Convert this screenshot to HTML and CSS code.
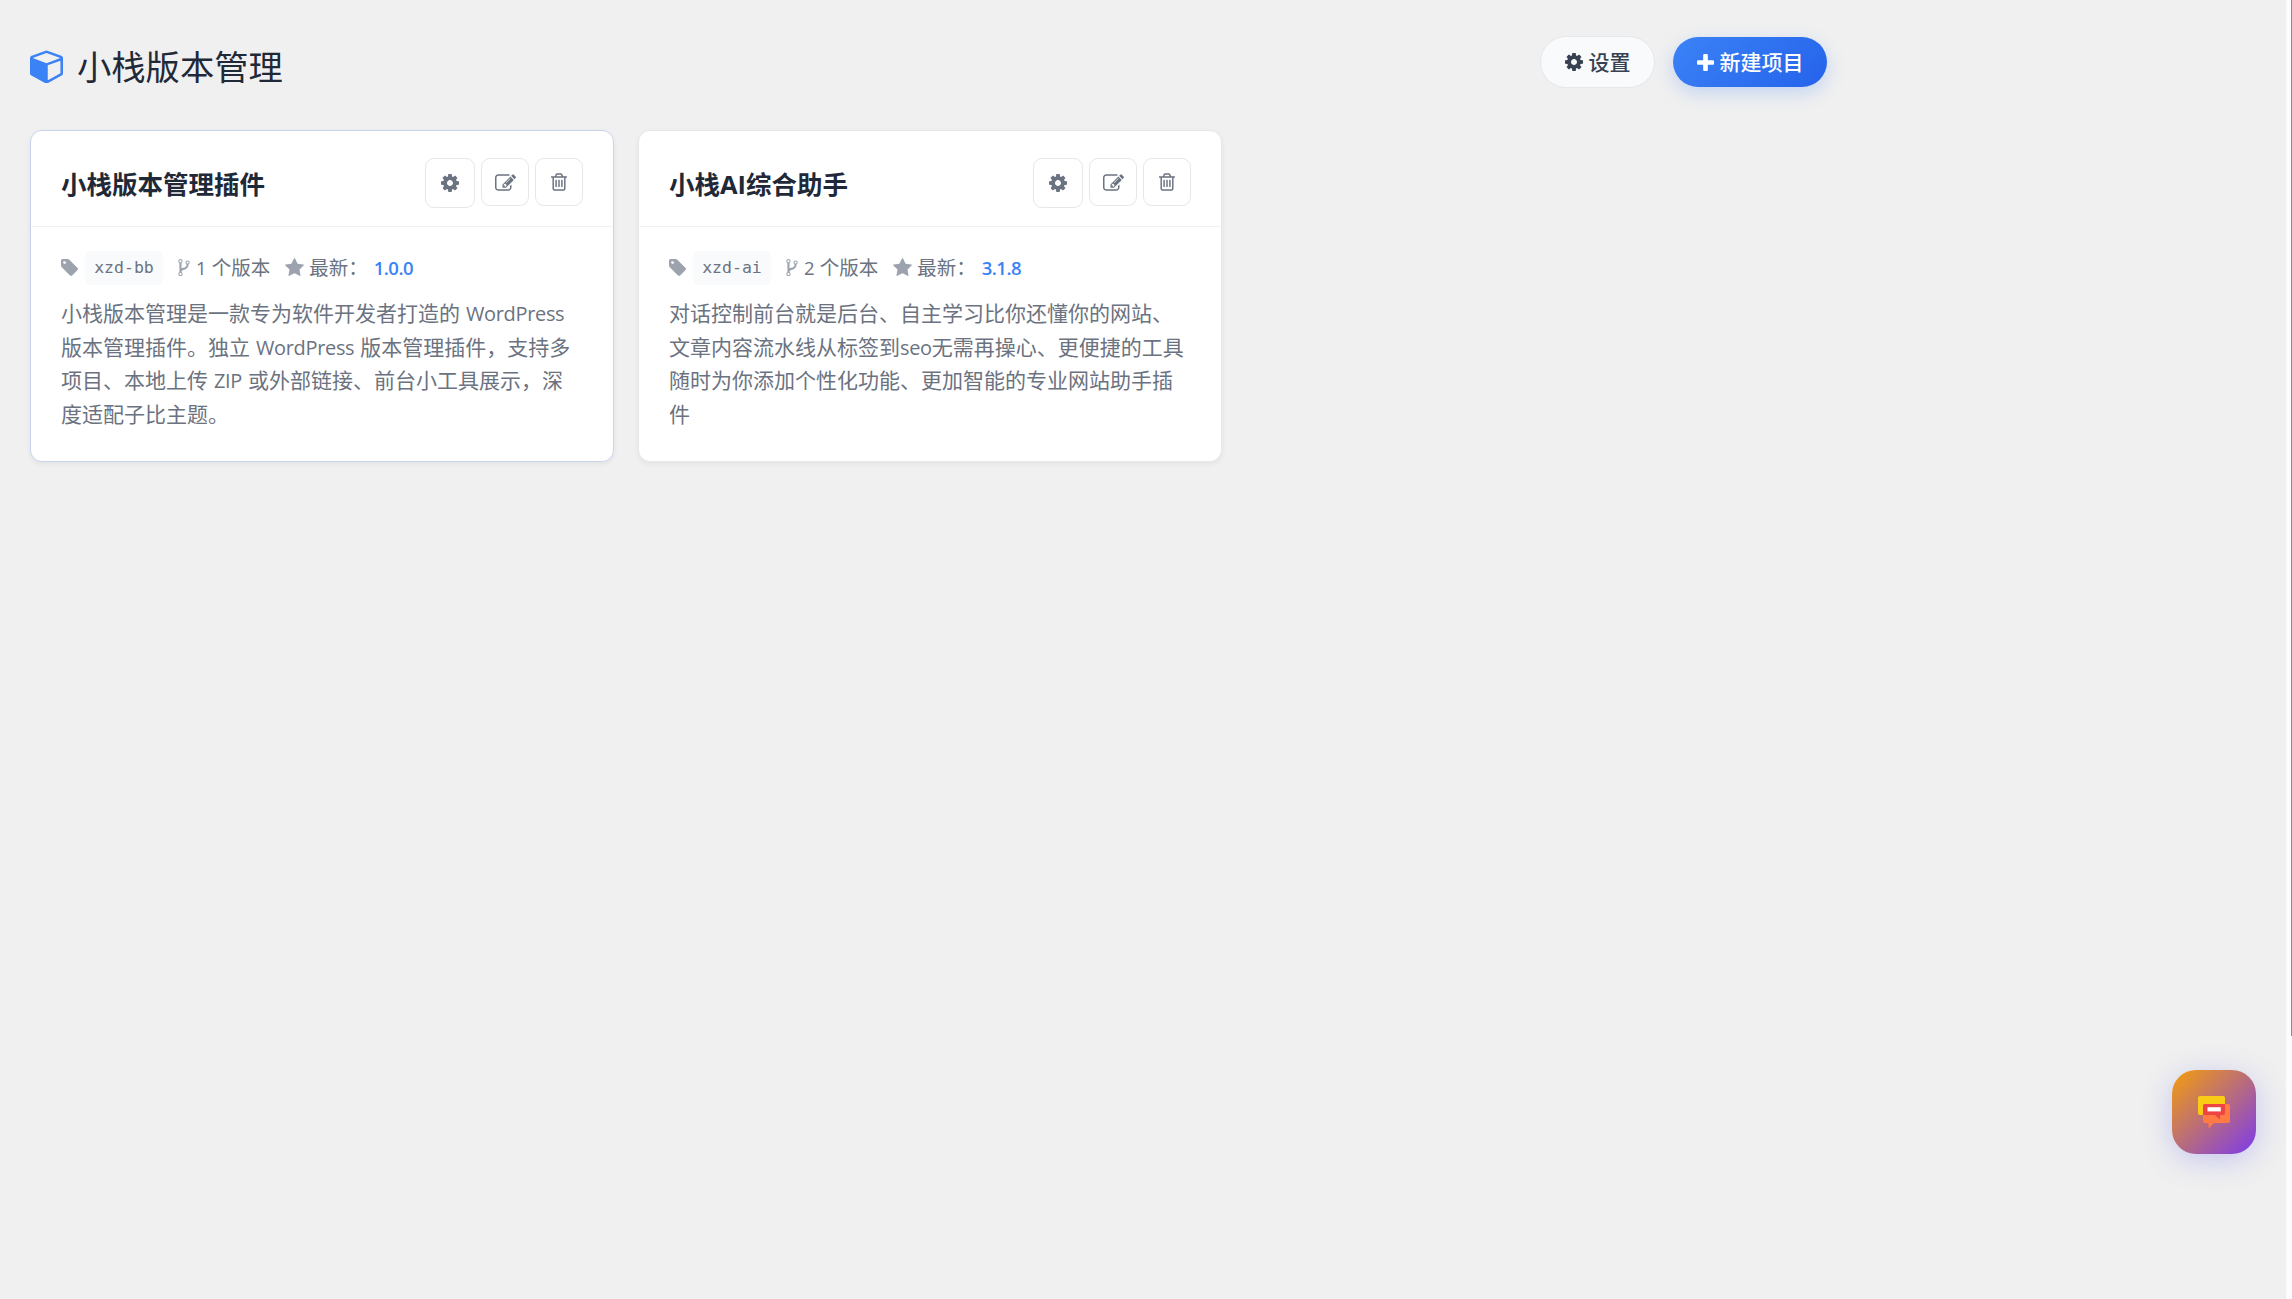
FILE: index.html
```html
<!DOCTYPE html>
<html lang="zh-CN">
<head>
<meta charset="utf-8">
<title>小栈版本管理</title>
<link rel="stylesheet" href="styles.css">
</head>
<body>
<svg class="sprite" aria-hidden="true">
  <symbol id="cube" viewBox="0 0 1664 1792"><path d="M896 1629l640-349v-636l-640 233v752zm-64-865l698-254-698-254-698 254zm832-252v768q0 35-18 65t-49 47l-704 384q-28 16-61 16t-61-16l-704-384q-31-17-49-47t-18-65v-768q0-40 23-73t61-47l704-256q22-8 44-8t44 8l704 256q38 14 61 47t23 73z"/></symbol>
  <symbol id="cog" viewBox="128 128 1536 1536"><path d="M1152 896q0-106-75-181t-181-75-181 75-75 181 75 181 181 75 181-75 75-181zm512-109v222q0 12-8 23t-20 13l-185 28q-19 54-39 91 35 50 107 138 10 12 10 25t-9 23q-27 37-99 108t-94 71q-12 0-26-9l-138-108q-44 23-91 38-16 136-29 186-7 28-36 28h-222q-14 0-24.5-8.5t-11.5-21.5l-28-184q-49-16-90-37l-141 107q-10 9-25 9-14 0-25-11-126-114-165-168-7-10-7-23 0-12 8-23 15-21 51-66.5t54-70.5q-27-50-41-99l-183-27q-13-2-21-12.5t-8-23.5v-222q0-12 8-23t19-13l186-28q14-46 39-92-40-57-107-138-10-12-10-24 0-10 9-23 26-36 98.5-107.5t94.5-71.5q13 0 26 10l138 107q44-23 91-38 16-136 29-186 7-28 36-28h222q14 0 24.5 8.5t11.5 21.5l28 184q49 16 90 37l142-107q9-9 24-9 13 0 25 10 129 119 165 170 7 8 7 22 0 12-8 23-15 21-51 66.5t-54 70.5q26 50 41 98l183 28q13 2 21 12.5t8 23.5z"/></symbol>
  <symbol id="plus" viewBox="192 128 1408 1408"><path d="M1600 736v192q0 40-28 68t-68 28h-416v416q0 40-28 68t-68 28h-192q-40 0-68-28t-28-68v-416h-416q-40 0-68-28t-28-68v-192q0-40 28-68t68-28h416v-416q0-40 28-68t68-28h192q40 0 68 28t28 68v416h416q40 0 68 28t28 68z"/></symbol>
  <symbol id="tag" viewBox="128 128 1515 1515"><path d="M576 448q0-53-37.500-90.500t-90.500-37.500-90.500 37.500-37.500 90.500 37.500 90.500 90.500 37.500 90.500-37.500 37.500-90.500zm1067 576q0 53-37 90l-491 492q-39 37-91 37-53 0-90-37l-715-716q-38-37-64.500-101t-26.500-117v-416q0-52 38-90t90-38h416q53 0 117 26.500t102 64.500l715 714q37 39 37 91z"/></symbol>
  <symbol id="fork" viewBox="384 128 1024 1536"><path d="M672 1472q0-40-28-68t-68-28-68 28-28 68 28 68 68 28 68-28 28-68zm0-1152q0-40-28-68t-68-28-68 28-28 68 28 68 68 28 68-28 28-68zm640 128q0-40-28-68t-68-28-68 28-28 68 28 68 68 28 68-28 28-68zm96 0q0 52-26 96.500t-70 69.500q-2 287-226 414-67 38-203 81-128 40-169.500 71t-41.500 100v26q44 25 70 69.500t26 96.500q0 80-56 136t-136 56-136-56-56-136q0-52 26-96.500t70-69.500v-820q-44-25-70-69.500t-26-96.500q0-80 56-136t136-56 136 56 56 136q0 52-26 96.500t-70 69.500v497q54-26 154-57 55-17 87.500-29.500t70.500-31 59-39.500 40.500-51 28-69.500 8.500-91.500q-44-25-70-69.500t-26-96.500q0-80 56-136t136-56 136 56 56 136z"/></symbol>
  <symbol id="star" viewBox="64 32 1664 1587"><path d="M1728 647q0 22-26 48l-363 354 86 500q1 7 1 20 0 21-10.500 35.500t-30.500 14.500q-19 0-40-12l-449-236-449 236q-22 12-40 12-21 0-31.500-14.500t-10.500-35.500q0-6 2-20l86-500-364-354q-25-27-25-48 0-37 56-46l502-73 225-455q19-41 49-41t49 41l225 455 502 73q56 9 56 46z"/></symbol>
  <symbol id="edit" viewBox="0 128 1792 1408"><path d="M888 1184l116-116-152-152-116 116v56h96v96h56zm440-720q-16-16-33 1l-350 350q-17 17-1 33t33-1l350-350q17-17 1-33zm80 594v190q0 119-84.500 203.500t-203.500 84.500h-832q-119 0-203.500-84.500t-84.500-203.500v-832q0-119 84.500-203.500t203.500-84.500h832q63 0 117 25 15 7 18 23 3 17-9 29l-49 49q-14 14-32 8-23-6-45-6h-832q-66 0-113 47t-47 113v832q0 66 47 113t113 47h832q66 0 113-47t47-113v-126q0-13 9-22l64-64q15-15 35-7t20 29zm-96-738l288 288-672 672h-288v-288zm444 132l-92 92-288-288 92-92q28-28 68-28t68 28l152 152q28 28 28 68t-28 68z"/></symbol>
  <symbol id="trash" viewBox="192 128 1408 1536"><path d="M704 736v576q0 14-9 23t-23 9h-64q-14 0-23-9t-9-23v-576q0-14 9-23t23-9h64q14 0 23 9t9 23zm256 0v576q0 14-9 23t-23 9h-64q-14 0-23-9t-9-23v-576q0-14 9-23t23-9h64q14 0 23 9t9 23zm256 0v576q0 14-9 23t-23 9h-64q-14 0-23-9t-9-23v-576q0-14 9-23t23-9h64q14 0 23 9t9 23zm128 724v-948h-896v948q0 22 7 40.500t14.500 27 10.500 8.500h832q3 0 10.500-8.500t14.500-27 7-40.500zm-672-1076h448l-48-117q-7-9-17-11h-317q-10 2-17 11zm928 32v64q0 14-9 23t-23 9h-96v948q0 83-47 143.500t-113 60.500h-832q-66 0-113-58.500t-47-141.500v-952h-96q-14 0-23-9t-9-23v-64q0-14 9-23t23-9h309l70-167q15-37 54-63t79-26h320q40 0 79 26t54 63l70 167h309q14 0 23 9t9 23z"/></symbol>
</svg>
<main class="page">
  <header class="topbar">
    <h1 class="title"><svg class="title-icon"><use href="#cube"/></svg>小栈版本管理</h1>
    <div class="toolbar">
      <button class="btn btn-plain"><svg class="i-cog"><use href="#cog"/></svg><span class="btn-label">设置</span></button>
      <button class="btn btn-primary"><svg class="i-plus"><use href="#plus"/></svg><span class="btn-label">新建项目</span></button>
    </div>
  </header>
  <section class="cards">
    <article class="card card-active">
      <div class="card-head">
        <h2 class="card-title">小栈版本管理插件</h2>
        <div class="actions">
          <button class="act act-cog"><svg class="i-cog"><use href="#cog"/></svg></button>
          <button class="act"><svg class="i-edit"><use href="#edit"/></svg></button>
          <button class="act"><svg class="i-trash"><use href="#trash"/></svg></button>
        </div>
      </div>
      <div class="card-body">
        <div class="meta">
          <span class="slug-wrap"><svg class="i-tag"><use href="#tag"/></svg><code class="slug">xzd-bb</code></span>
          <span class="count"><svg class="i-fork"><use href="#fork"/></svg><span class="meta-text"><span class="lat">1</span> 个版本</span></span>
          <span class="latest"><svg class="i-star"><use href="#star"/></svg><span class="meta-text">最新：<b class="ver">1.0.0</b></span></span>
        </div>
        <p class="desc">小栈版本管理是一款专为软件开发者打造的 <span class="lat">WordPress</span><br>版本管理插件。独立 <span class="lat">WordPress</span> 版本管理插件，支持多<br>项目、本地上传 <span class="lat">ZIP</span> 或外部链接、前台小工具展示，深<br>度适配子比主题。</p>
      </div>
    </article>
    <article class="card">
      <div class="card-head">
        <h2 class="card-title">小栈<span class="lat">AI</span>综合助手</h2>
        <div class="actions">
          <button class="act act-cog"><svg class="i-cog"><use href="#cog"/></svg></button>
          <button class="act"><svg class="i-edit"><use href="#edit"/></svg></button>
          <button class="act"><svg class="i-trash"><use href="#trash"/></svg></button>
        </div>
      </div>
      <div class="card-body">
        <div class="meta">
          <span class="slug-wrap"><svg class="i-tag"><use href="#tag"/></svg><code class="slug">xzd-ai</code></span>
          <span class="count"><svg class="i-fork"><use href="#fork"/></svg><span class="meta-text"><span class="lat">2</span> 个版本</span></span>
          <span class="latest"><svg class="i-star"><use href="#star"/></svg><span class="meta-text">最新：<b class="ver">3.1.8</b></span></span>
        </div>
        <p class="desc">对话控制前台就是后台、自主学习比你还懂你的网站、<br>文章内容流水线从标签到<span class="lat">seo</span>无需再操心、更便捷的工具<br>随时为你添加个性化功能、更加智能的专业网站助手插<br>件</p>
      </div>
    </article>
  </section>
</main>
<div class="gutter"><div class="thumb"></div></div>
<button class="chat" aria-label="在线咨询">
  <svg class="chat-icon" viewBox="0 0 32 33">
    <path fill="#facc15" d="M2 0h23q2 0 2 2v15q0 2-2 2H2q-2 0-2-2V2q0-2 2-2z"/>
    <path fill="#ff7a45" d="M7 8h23q2 0 2 2v15q0 2-2 2H16l-5.500 5.500V27H7q-2 0-2-2V10q0-2 2-2z"/>
    <path fill="#ef4444" d="M7 8h20v9q0 2-2 2H22v4.500L17 19H5V10q0-2 2-2z"/>
    <path fill="#fff" d="M9.500 11.200h13.300v4.200H9.500z"/>
  </svg>
</button>
</body>
</html>
```
FILE: styles.css
```css
* { box-sizing: border-box; }
body {
  margin: 0;
  height: 1299px;
  overflow: hidden;
  display: flex;
  background: #f0f0f0;
  font-family: "Noto Sans CJK SC", sans-serif;
  color: #1f2937;
}
.sprite { position: absolute; width: 0; height: 0; }
svg { display: block; flex: none; fill: currentColor; }
button { font-family: inherit; padding: 0; }
.page { flex: 1; padding: 36px 0 0 30px; }
.topbar {
  width: 1797px;
  height: 94px;
  display: flex;
  justify-content: space-between;
  align-items: flex-start;
}
.title {
  margin: 3px 0 0;
  display: flex;
  align-items: center;
  gap: 14px;
  font-size: 34.3px;
  line-height: 52px;
  font-weight: 400;
}
.title-icon { width: 33px; height: 35.5px; margin-top: 1px; color: #3b82f6; }
.toolbar { display: flex; align-items: center; gap: 18px; }
.btn {
  display: flex;
  align-items: center;
  justify-content: center;
  gap: 6px;
  border-radius: 26px;
  font-size: 21px;
  line-height: 30px;
  font-weight: 500;
}
.btn-label { margin-bottom: 2px; }
.btn-plain {
  width: 115px;
  height: 52px;
  border: 1px solid #e5e7eb;
  background: #f9fafb;
  color: #374151;
}
.btn-primary {
  width: 154px;
  height: 50px;
  border: 0;
  background: linear-gradient(135deg, #3b82f6, #2563eb);
  box-shadow: 0 6px 18px rgba(59, 130, 246, .25);
  color: #fff;
}
.i-cog { width: 18px; height: 18px; }
.i-plus { width: 17px; height: 17px; }
.i-tag { width: 17px; height: 17px; }
.i-fork { width: 12px; height: 17px; }
.i-star { width: 19px; height: 18px; }
.i-edit { width: 21px; height: 17px; }
.i-trash { width: 16px; height: 18px; }
.cards {
  display: grid;
  grid-template-columns: 584px 584px;
  gap: 24px;
}
.card {
  height: 332px;
  border: 1px solid #e5e7eb;
  border-radius: 12px;
  background: #fff;
  box-shadow: 0 2px 5px rgba(0, 0, 0, .06);
}
.card-active { border-color: #c9d5f0; }
.card-head {
  height: 96px;
  padding: 27px 30px 0;
  display: flex;
  justify-content: space-between;
  align-items: flex-start;
  border-bottom: 1px solid #f0f1f3;
}
.card-title {
  margin: 6px 0 0;
  font-size: 25.5px;
  line-height: 38px;
  font-weight: 700;
}
.actions { display: flex; gap: 6px; align-items: flex-start; }
.act {
  width: 48px;
  height: 48px;
  display: flex;
  align-items: center;
  justify-content: center;
  border: 1px solid #e5e7eb;
  border-radius: 9px;
  background: #fff;
  color: #6b7280;
}
.act-cog { width: 50px; height: 50px; }
.card-body { padding: 24px 30px 0; color: #6b7280; }
.meta {
  display: flex;
  align-items: center;
  height: 34px;
  gap: 15px;
  font-size: 19.5px;
  line-height: 34px;
}
.meta svg { color: #9ca3af; margin-bottom: 2px; }
.meta-text { margin-bottom: 2px; word-spacing: 1px; }
.slug-wrap, .count, .latest { display: flex; align-items: center; }
.slug-wrap { gap: 7px; }
.count { gap: 6px; }
.latest { gap: 5px; }
.slug {
  width: 78px;
  height: 34px;
  border-radius: 6px;
  background: #f9fafb;
  text-align: center;
  font-family: "DejaVu Sans Mono", monospace;
  font-size: 16.5px;
  line-height: 33px;
}
.lat { font-family: "Open Sans", sans-serif; font-size: .95em; letter-spacing: -.015em; line-height: 1; }
.card-title .lat { font-size: 1em; letter-spacing: 0; }
.ver {
  margin-left: 6px;
  font-family: "Open Sans", sans-serif;
  font-weight: 600;
  font-size: 18.5px;
  letter-spacing: -.5px;
  line-height: 1;
  color: #3b82f6;
}
.desc {
  margin: 11px 0 0;
  font-size: 21px;
  line-height: 33.5px;
  word-spacing: 1.2px;
  white-space: nowrap;
}
.gutter { width: 6px; height: 1299px; background: #fcfcfc; }
.thumb { width: 1px; height: 1036px; margin-left: 5px; background: #8b8b8b; }
.chat {
  position: fixed;
  left: 2172px;
  top: 1070px;
  width: 84px;
  height: 84px;
  padding: 0;
  display: flex;
  align-items: center;
  justify-content: center;
  border: 0;
  border-radius: 24px;
  background: linear-gradient(135deg, #f59e0b, #7c3aed);
  box-shadow: 0 6px 30px rgba(99, 102, 241, .3);
}
.chat-icon { width: 32px; height: 33px; }
```
